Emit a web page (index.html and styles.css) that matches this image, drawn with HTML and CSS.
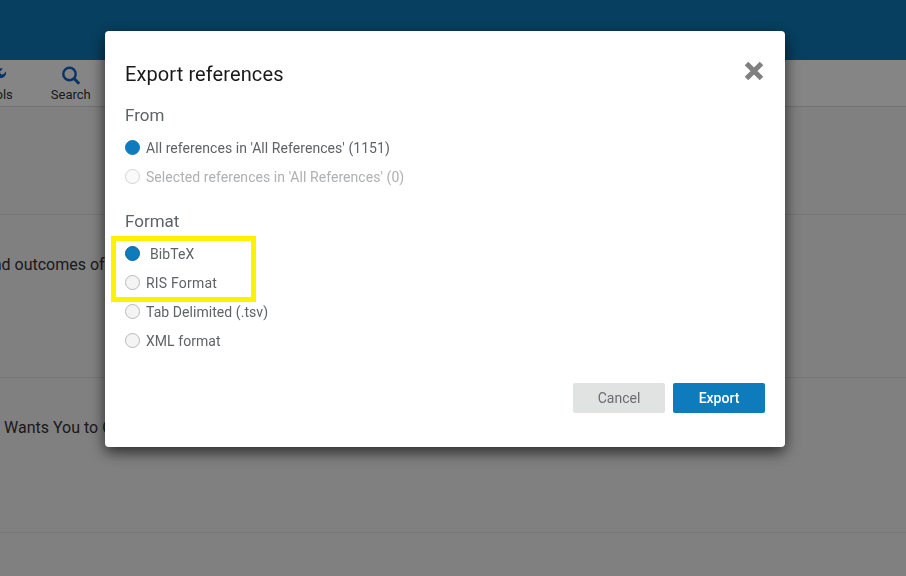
FILE: index.html
```html
<!DOCTYPE html>
<html lang="en">
<head>
<meta charset="utf-8">
<title>Export references</title>
<link rel="stylesheet" href="styles.css">
</head>
<body>
<div class="page">
  <header class="topbar"></header>
  <nav class="toolbar">
    <div class="tool tool-tools">
      <svg class="tool-icon" viewBox="0 0 20 20" width="20" height="20"><path d="M3 13 L9.5 8.5 A5 5 0 0 1 16 2.5 L13 5.5 L13.5 8 L16 8.5 L19 5.5 A5.5 5.5 0 0 1 12.5 12 L7 17 A3 3 0 0 1 3 13 Z" fill="#0e63c4"/></svg>
      <span>Tools</span>
    </div>
    <div class="tool">
      <svg class="tool-icon" viewBox="0 0 20 20" width="20" height="20"><circle cx="8.5" cy="8" r="6.2" fill="none" stroke="#0e63c4" stroke-width="2.4"/><path d="M13 12.5 L18.2 17.7" stroke="#0e63c4" stroke-width="3" fill="none"/></svg>
      <span>Search</span>
    </div>
  </nav>
  <section class="row row-first"></section>
  <section class="row row-second"><p class="row-text shift-a">and outcomes of a systematic review of the literature</p></section>
  <section class="row row-third"><p class="row-text shift-b">Wants You to Consider about the research process</p></section>
  <section class="row row-last"></section>
</div>

<div class="backdrop">
  <div class="modal">
    <button class="close" type="button" aria-label="Close">
      <svg viewBox="0 0 20 20" width="20" height="20"><path d="M2.5 2.5 L17.5 17.5 M17.5 2.5 L2.5 17.5" stroke="#808080" stroke-width="5" fill="none"/></svg>
    </button>
    <h2 class="title">Export references</h2>
    <h3 class="group-title">From</h3>
    <div class="options">
      <label class="option"><input class="radio" type="radio" name="from" checked><span>All references in 'All References' (1151)</span></label>
      <label class="option option-disabled"><input class="radio" type="radio" name="from" disabled><span>Selected references in 'All References' (0)</span></label>
    </div>
    <h3 class="group-title group-format">Format</h3>
    <div class="options">
      <label class="option"><input class="radio radio-ring" type="radio" name="format" checked><span class="bib">BibTeX</span></label>
      <label class="option"><input class="radio" type="radio" name="format"><span class="wide">RIS Format</span></label>
      <label class="option"><input class="radio" type="radio" name="format"><span>Tab Delimited (.tsv)</span></label>
      <label class="option"><input class="radio" type="radio" name="format"><span>XML format</span></label>
    </div>
    <div class="actions">
      <button class="btn btn-cancel" type="button">Cancel</button>
      <button class="btn btn-export" type="button">Export</button>
    </div>
    <div class="highlight"></div>
  </div>
</div>
</body>
</html>
```
FILE: styles.css
```css
* { box-sizing: border-box; }
html, body { margin: 0; height: 100%; overflow: hidden; }
body { font-family: Roboto, "Liberation Sans", sans-serif; background: #f6f6f6; color: #222; }

.page { display: flex; flex-direction: column; height: 576px; overflow: hidden; }
.topbar { height: 60px; background: #0d7ab8; flex: none; }
.toolbar { height: 47px; flex: none; background: #ffffff; border-bottom: 1px solid #d8d8d8; display: flex; gap: 38px; margin-left: -19px; padding-top: 6px; }
.tool { display: flex; flex-direction: column; align-items: center; font-size: 13px; color: #333; line-height: 15px; }
.tool-icon { display: block; margin-bottom: 1px; }

.row { flex: none; border-bottom: 1px solid #e2e2e2; }
.row-first { height: 108px; }
.row-second { height: 163px; padding-top: 40px; }
.row-third { height: 155px; padding-top: 40px; }
.row-last { flex: 1; border-bottom: 0; }
.row-text { margin: 0; font-size: 16px; line-height: 20px; white-space: nowrap; color: #333; }
.shift-a { margin-left: -16px; }
.shift-b { margin-left: 4px; }

.backdrop { position: fixed; inset: 0; background: rgba(0, 0, 0, 0.48); display: flex; justify-content: center; align-items: flex-start; padding: 31px 16px 0 0; }
.modal { position: relative; width: 680px; height: 416px; background: #fff; border-radius: 4px; box-shadow: 0 5px 15px rgba(0, 0, 0, 0.7); padding: 31px 20px 0; color: #5f6367; }

.close { position: absolute; top: 30px; right: 21px; width: 20px; height: 20px; padding: 0; border: 0; background: none; }
.close svg { display: block; }

.title { margin: 0; font-size: 20px; font-weight: 400; line-height: 24px; color: #1a1a1a; letter-spacing: 0.1px; }
.group-title { margin: 18px 0 0; font-size: 17px; font-weight: 400; line-height: 22px; color: #5f6367; }
.group-format { margin-top: 19px; }
.options { display: flex; flex-direction: column; margin-top: 7px; }
.option { display: flex; align-items: center; gap: 6px; height: 29px; font-size: 14px; color: #5f6367; letter-spacing: 0.06px; }
.option-disabled { color: #aeb0b2; }
.bib { margin-left: 4px; }
.wide { letter-spacing: 0.2px; }

.radio { appearance: none; -webkit-appearance: none; margin: 0; width: 15px; height: 15px; border-radius: 50%; border: 1px solid #b8b9ba; background: #f4f4f4; flex: none; }
.radio:checked { background: #0e7bbd; border-color: #0e7bbd; }
.radio:checked.radio-ring { border-color: #0a659e; }
.radio:disabled { background: #fafafa; border-color: #d4d4d4; }

.actions { position: absolute; right: 20px; bottom: 34px; display: flex; gap: 8px; }
.btn { width: 92px; height: 30px; border: 0; border-radius: 2px; font-family: inherit; font-size: 14px; padding: 0; }
.btn-cancel { background: #e1e3e3; color: #6a6d70; }
.btn-export { background: #0e7bbd; color: #fff; font-weight: 500; }

.highlight { position: absolute; left: 6px; top: 205px; width: 145px; height: 66px; border: 5px solid #fff200; pointer-events: none; }
```
